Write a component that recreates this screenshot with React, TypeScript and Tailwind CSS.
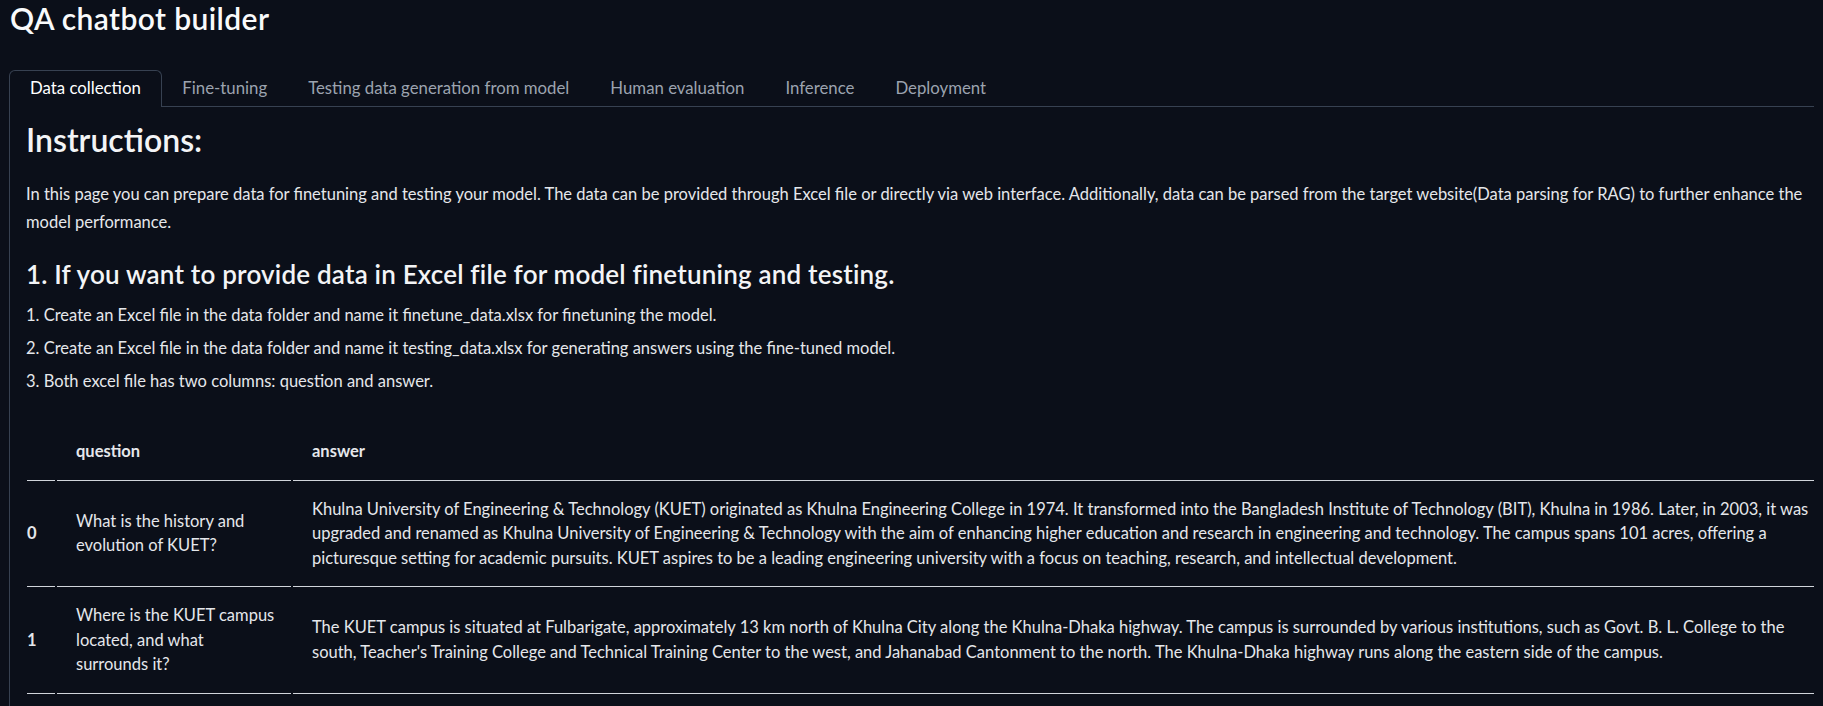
import React from "react";

const tabs = [
  "Data collection",
  "Fine-tuning",
  "Testing data generation from model",
  "Human evaluation",
  "Inference",
  "Deployment",
];

// question column is narrow, so its lines are kept as in the original
const rows = [
  {
    q: ["What is the history and", "evolution of KUET?"],
    a: "Khulna University of Engineering & Technology (KUET) originated as Khulna Engineering College in 1974. It transformed into the Bangladesh Institute of Technology (BIT), Khulna in 1986. Later, in 2003, it was upgraded and renamed as Khulna University of Engineering & Technology with the aim of enhancing higher education and research in engineering and technology. The campus spans 101 acres, offering a picturesque setting for academic pursuits. KUET aspires to be a leading engineering university with a focus on teaching, research, and intellectual development.",
  },
  {
    q: ["Where is the KUET campus", "located, and what", "surrounds it?"],
    a: "The KUET campus is situated at Fulbarigate, approximately 13 km north of Khulna City along the Khulna-Dhaka highway. The campus is surrounded by various institutions, such as Govt. B. L. College to the south, Teacher's Training College and Technical Training Center to the west, and Jahanabad Cantonment to the north. The Khulna-Dhaka highway runs along the eastern side of the campus.",
  },
];

const App = () => {
  return (
    <div className="min-h-screen bg-[#0b0f19] text-[#e5e7eb] font-['Lato',sans-serif] px-[9px] pt-px overflow-hidden">
      <h1 className="text-[30px] leading-[34px] font-semibold tracking-[0.4px] text-[#f9fafb] pl-px">
        QA chatbot builder
      </h1>

      <div className="flex items-end mt-[35px]">
        {tabs.map((t, i) =>
          i === 0 ? (
            <div
              key={t}
              className="px-[20px] pt-[7px] pb-[9px] text-[16.8px] leading-[20px] text-white border border-b-0 border-[#374151] rounded-t-md"
            >
              {t}
            </div>
          ) : (
            <div
              key={t}
              className="px-[20.5px] pt-[8px] pb-[8px] text-[16.8px] leading-[20px] text-[#9ca3af] border-b border-[#374151]"
            >
              {t}
            </div>
          )
        )}
        <div className="flex-1 border-b border-[#374151]" />
      </div>

      <div className="border-l border-[#374151] pl-4 pt-[14px] pb-4">
        <h2 className="text-[32px] leading-[38px] font-semibold text-[#f3f4f6]">Instructions:</h2>
        <p className="mt-[21px] text-[16.5px] leading-[28px]">
          In this page you can prepare data for finetuning and testing your model. The data can be provided through Excel
          file or directly via web interface. Additionally, data can be parsed from the target website(Data parsing for
          RAG) to further enhance the model performance.
        </p>

        <h3 className="mt-[23px] text-[26px] leading-[30px] font-semibold tracking-[0.2px] text-[#f3f4f6]">
          1. If you want to provide data in Excel file for model finetuning and testing.
        </h3>
        <div className="mt-[12px] flex flex-col gap-[5px] text-[16.5px] leading-[28px]">
          <p>1. Create an Excel file in the data folder and name it finetune_data.xlsx for finetuning the model.</p>
          <p>
            2. Create an Excel file in the data folder and name it testing_data.xlsx for generating answers using the
            fine-tuned model.
          </p>
          <p>3. Both excel file has two columns: question and answer.</p>
        </div>

        <div className="mt-[28px] ml-px grid grid-cols-[28px_234px_1fr] gap-x-[2px] text-[16.5px] leading-[24.5px]">
          <div className="border-b border-[#d1d5db]" />
          <div className="border-b border-[#d1d5db] pl-[19px] pr-[19px] py-4 font-bold">question</div>
          <div className="border-b border-[#d1d5db] pl-[19px] pr-[2px] py-4 font-bold">answer</div>

          {rows.map((r, i) => (
            <React.Fragment key={i}>
              <div className="border-b border-[#d1d5db] flex items-center font-bold">{i}</div>
              <div className="border-b border-[#d1d5db] flex flex-col justify-center pl-[19px] pr-[10px] py-4">
                {r.q.map((line) => (
                  <span key={line} className="whitespace-nowrap">
                    {line}
                  </span>
                ))}
              </div>
              <div className="border-b border-[#d1d5db] flex items-center pl-[19px] pr-[2px] py-4">{r.a}</div>
            </React.Fragment>
          ))}
        </div>
      </div>
    </div>
  );
};

export default App;
